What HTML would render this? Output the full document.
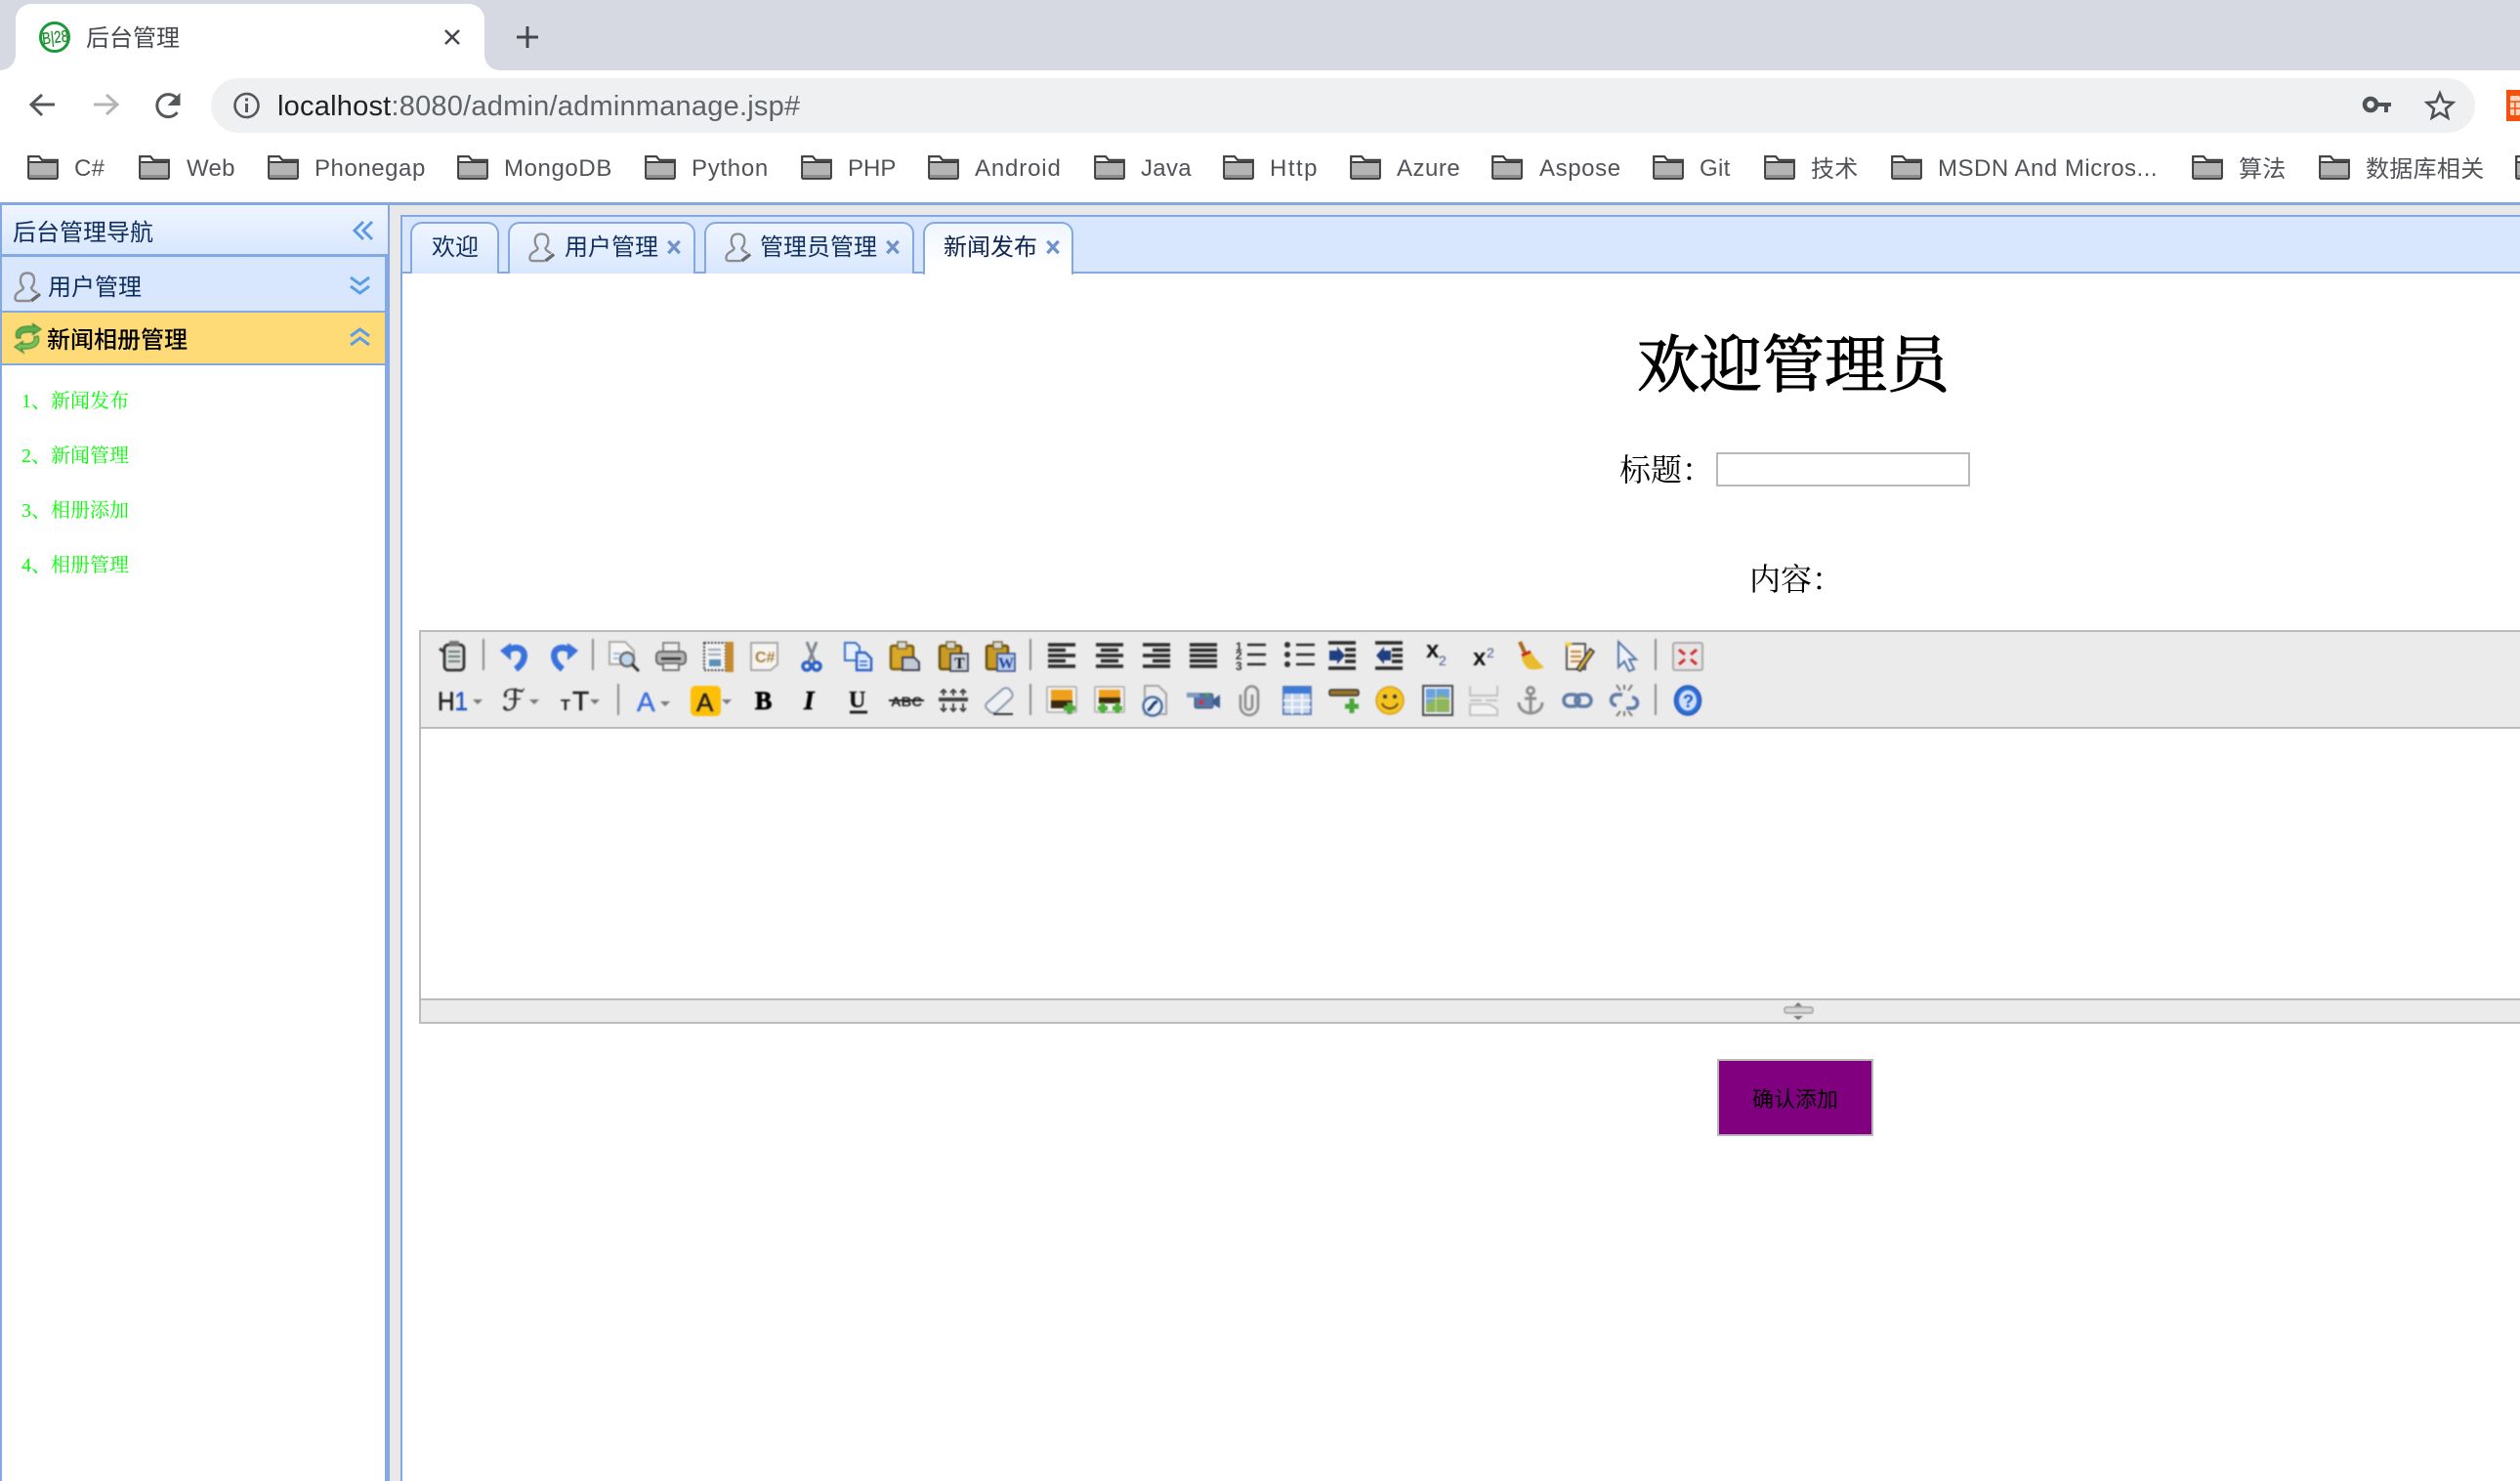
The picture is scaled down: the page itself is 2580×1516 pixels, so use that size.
<!DOCTYPE html>
<html lang="zh-CN"><head><meta charset="utf-8"><title>后台管理</title>
<style>
html,body{margin:0;padding:0;background:#fff}
body{position:relative;width:2580px;height:1516px;overflow:hidden;font-family:"Liberation Sans","Noto Sans CJK SC",sans-serif}
.b{position:absolute;box-sizing:border-box}
.t{position:absolute;white-space:nowrap;line-height:40px;height:40px}
.bm{font-size:24px;color:#505358;letter-spacing:.3px;top:153px}
.cj{top:151px;font-family:"Noto Sans CJK SC",sans-serif}
.nav{font-family:"Noto Sans CJK SC",sans-serif;font-size:24px;color:#0e2d5f}
.tab{position:absolute;top:227px;height:53px;box-sizing:border-box;border:2px solid #84a9e2;border-bottom:0;border-radius:12px 12px 0 0;background:linear-gradient(#eff5ff,#d8e7fe)}
.g{font-family:"Liberation Serif","Noto Serif CJK SC",serif;font-size:20px;color:#0f0;left:22px}
.s{font-family:"Liberation Serif","Noto Serif CJK SC",serif;color:#000;font-size:32px}
svg{position:absolute;left:0;top:0}
</style></head><body>

<!-- browser chrome -->
<div class="b" style="left:0;top:0;width:2580px;height:72px;background:#d6d9e2"></div>
<div class="b" style="left:216px;top:80px;width:2318px;height:56px;border-radius:28px;background:#eff0f2"></div>
<div class="t" style="left:88px;top:17px;font-size:24px;color:#45474c;font-family:'Noto Sans CJK SC',sans-serif;z-index:3">后台管理</div>
<div class="t" style="left:284px;top:89px;font-size:29px;letter-spacing:.22px;color:#5f6368;z-index:3"><span style="color:#202124">localhost</span>:8080/admin/adminmanage.jsp#</div>
<div class="t bm" style="left:76px">C#</div>
<div class="t bm" style="left:191px">Web</div>
<div class="t bm" style="left:322px;letter-spacing:.55px">Phonegap</div>
<div class="t bm" style="left:516px;letter-spacing:.6px">MongoDB</div>
<div class="t bm" style="left:708px;letter-spacing:.7px">Python</div>
<div class="t bm" style="left:868px;letter-spacing:0">PHP</div>
<div class="t bm" style="left:998px;letter-spacing:.85px">Android</div>
<div class="t bm" style="left:1168px">Java</div>
<div class="t bm" style="left:1300px;letter-spacing:1.5px">Http</div>
<div class="t bm" style="left:1430px;letter-spacing:.5px">Azure</div>
<div class="t bm" style="left:1576px;letter-spacing:.6px">Aspose</div>
<div class="t bm" style="left:1740px">Git</div>
<div class="t bm cj" style="left:1854px">技术</div>
<div class="t bm" style="left:1984px;letter-spacing:.5px">MSDN And Micros...</div>
<div class="t bm cj" style="left:2292px">算法</div>
<div class="t bm cj" style="left:2422px">数据库相关</div>

<!-- app background -->
<div class="b" style="left:0;top:207px;width:2580px;height:1309px;background:#e8e8e8;border-top:3px solid #84a9e2"></div>

<!-- left panel -->
<div class="b" style="left:0;top:263px;width:399px;height:1253px;background:#fff;border-left:2px solid #84a9e2;border-right:3px solid #84a9e2"></div>
<div class="b" style="left:394px;top:263px;width:2px;height:1253px;background:#84a9e2"></div>
<div class="b" style="left:0;top:208px;width:399px;height:55px;background:linear-gradient(#eff5ff,#d8e7fe);border:2px solid #84a9e2;border-bottom:3px solid #84a9e2"></div>
<div class="t nav" style="left:13px;top:216px">后台管理导航</div>
<div class="b" style="left:2px;top:263px;width:392px;height:57px;background:#d8e7fe;border-bottom:2px solid #84a9e2"></div>
<div class="t nav" style="left:49px;top:272px">用户管理</div>
<div class="b" style="left:2px;top:320px;width:392px;height:54px;background:#ffdb78;border-bottom:2px solid #84a9e2"></div>
<div class="t nav" style="left:48px;top:326px;color:#000;font-weight:500">新闻相册管理</div>
<div class="t g" style="top:391px">1、新闻发布</div>
<div class="t g" style="top:447px">2、新闻管理</div>
<div class="t g" style="top:503px">3、相册添加</div>
<div class="t g" style="top:559px">4、相册管理</div>

<!-- main panel -->
<div class="b" style="left:410px;top:220px;width:2170px;height:1296px;background:#fff;border-left:2px solid #84a9e2"></div>
<div class="b" style="left:412px;top:220px;width:2168px;height:60px;background:#d8e7fe;border-top:2px solid #84a9e2;border-bottom:2px solid #84a9e2"></div>
<div class="tab" style="left:420px;width:91px"></div>
<div class="tab" style="left:520px;width:192px"></div>
<div class="tab" style="left:721px;width:215px"></div>
<div class="tab" style="left:945px;width:154px;height:54px;background:linear-gradient(#eff5ff,#fff 85%)"></div>
<div class="t nav" style="left:442px;top:231px;color:#12305f">欢迎</div>
<div class="t nav" style="left:578px;top:231px;color:#12305f">用户管理</div>
<div class="t nav" style="left:778px;top:231px;color:#12305f">管理员管理</div>
<div class="t nav" style="left:966px;top:231px;color:#0e2350">新闻发布</div>

<!-- form -->
<div class="t s" style="left:1676px;top:335px;width:320px;height:80px;line-height:80px;font-size:64px;font-weight:400;-webkit-text-stroke:1.1px #000">欢迎管理员</div>
<div class="t s" style="left:1658px;top:461px">标题：</div>
<input class="b" style="left:1757px;top:463px;width:260px;height:35px;border:2px solid #b8b8b8;background:#fff;outline:0" type="text">
<div class="t s" style="left:1791px;top:573px">内容：</div>

<!-- editor -->
<div class="b" style="left:429px;top:645px;width:2151px;height:379px;border:2px solid #bcbcbc;border-right:0;background:#fff"></div>
<div class="b" style="left:431px;top:647px;width:2149px;height:99px;background:#ebebeb;border-bottom:2px solid #bcbcbc"></div>
<div class="b" style="left:429px;top:1022px;width:2151px;height:26px;background:#ebebeb;border:2px solid #bcbcbc;border-right:0"></div>
<button class="b" style="left:1758px;top:1084px;width:160px;height:79px;background:#800080;border:2px solid #b8b8b8;color:#000;font:22px 'Noto Sans CJK SC',sans-serif;padding:0">确认添加</button>

<svg width="2580" height="1516" viewBox="0 0 2580 1516" xmlns="http://www.w3.org/2000/svg" style="z-index:2">
<defs>
<symbol id="fd" viewBox="0 0 32 25" overflow="visible">
<path d="M1.2 1.2H12l3 3.6H30.8V22.6a1.2 1.2 0 0 1-1.2 1.2H2.4a1.2 1.2 0 0 1-1.2-1.2Z" fill="#fff" stroke="#3d3d3f" stroke-width="2.2"/>
<rect x="2.2" y="7.4" width="27.6" height="15.4" fill="#b5b5b5"/>
<rect x="2.2" y="6" width="27.6" height="2" fill="#3d3d3f"/>
<rect x="2.2" y="20" width="27.6" height="2.8" fill="#8c8c8c"/>
</symbol>
<symbol id="us" viewBox="0 0 30 32" overflow="visible">
<path d="M14 1.5c-5 0-7 3-7 7.5 0 3 1 5.500 3 7.500 0 3.500-8 3.500-8.500 10-.2 2.500 1 3.500 3 3.500h13M14 1.500c5 0 7 3 7 7.500 0 3-1 5.500-3 7.500 0 2.500 3 3.500 6 5.500" fill="none" stroke="#8e8e8e" stroke-width="2.400"/>
<path d="M18 30l9-7" stroke="#6a6a6a" stroke-width="3.400"/>
</symbol>
<symbol id="cl" viewBox="-8 -8 16 16" overflow="visible">
<path d="M-6.500-7L6.500 7M6.500-7L-6.500 7" stroke="#6f92c8" stroke-width="3.800" fill="none"/>
</symbol>
</defs>

<!-- browser tab shape -->
<path d="M0 72A16 16 0 0 0 16 56V20A16 16 0 0 1 32 4H480A16 16 0 0 1 496 20V56A16 16 0 0 0 512 72Z" fill="#fff"/>
<circle cx="56" cy="38" r="14.500" fill="#fff" stroke="#1c9a3a" stroke-width="3"/>
<text x="43" y="44" font-size="17" fill="#1f8f30" stroke="#1f8f30" stroke-width=".3" font-family="Liberation Sans" textLength="27" lengthAdjust="spacingAndGlyphs" transform="rotate(-6 56 38)">B|28</text>
<path d="M456 31l14 14M470 31l-14 14" stroke="#45474c" stroke-width="2.600"/>
<path d="M540 27v22M529 38h22" stroke="#45474c" stroke-width="3"/>

<!-- nav buttons -->
<path d="M56 107H32M43 97L32 107l11 11" fill="none" stroke="#54575c" stroke-width="3"/>
<path d="M96 107h24M109 97l11 10-11 10" fill="none" stroke="#b4b5b7" stroke-width="3"/>
<g transform="translate(-1.500 0)">
<path d="M183 115a11.500 11.500 0 1 1-1-15" fill="none" stroke="#54575c" stroke-width="3"/>
<path d="M186 95v13h-13Z" fill="#54575c"/>
</g>
<circle cx="252.500" cy="108" r="12" fill="none" stroke="#54575c" stroke-width="2.600"/>
<rect x="251" y="106" width="3" height="9" fill="#54575c"/><rect x="251" y="100.500" width="3" height="3" fill="#54575c"/>
<circle cx="2427" cy="107" r="6" fill="none" stroke="#4e5156" stroke-width="4.500"/>
<path d="M2433 105h15v4h-3v6h-4v-6h-8Z" fill="#4e5156"/>
<path d="M2498 95.500l3.700 8.800 9.600.8-7.300 6.300 2.200 9.300-8.200-5-8.200 5 2.200-9.300-7.300-6.300 9.600-.8Z" fill="none" stroke="#4e5156" stroke-width="2.600"/>
<rect x="2566" y="92" width="14" height="32" fill="#f4500f"/>
<rect x="2570" y="98" width="10" height="20" rx="2" fill="#fbd7c2"/>
<path d="M2570 104h10M2570 111h10M2575 104v14" stroke="#f4500f" stroke-width="1.500"/>

<!-- bookmark folders -->
<use href="#fd" x="28" y="159" width="32" height="25"/>
<use href="#fd" x="142" y="159" width="32" height="25"/>
<use href="#fd" x="274" y="159" width="32" height="25"/>
<use href="#fd" x="468" y="159" width="32" height="25"/>
<use href="#fd" x="660" y="159" width="32" height="25"/>
<use href="#fd" x="820" y="159" width="32" height="25"/>
<use href="#fd" x="950" y="159" width="32" height="25"/>
<use href="#fd" x="1120" y="159" width="32" height="25"/>
<use href="#fd" x="1252" y="159" width="32" height="25"/>
<use href="#fd" x="1382" y="159" width="32" height="25"/>
<use href="#fd" x="1527" y="159" width="32" height="25"/>
<use href="#fd" x="1692" y="159" width="32" height="25"/>
<use href="#fd" x="1806" y="159" width="32" height="25"/>
<use href="#fd" x="1936" y="159" width="32" height="25"/>
<use href="#fd" x="2244" y="159" width="32" height="25"/>
<use href="#fd" x="2374" y="159" width="32" height="25"/>
<use href="#fd" x="2575" y="159" width="32" height="25"/>

<!-- left nav icons -->
<path d="M372 227l-9 9 9 9M381 227l-9 9 9 9" fill="none" stroke="#5b9ae8" stroke-width="3"/>
<path d="M359 284l9.500 7 9.500-7M359 293l9.500 7 9.500-7" fill="none" stroke="#5a9fe6" stroke-width="3"/>
<path d="M359 344l9.500-7 9.500 7M359 353l9.500-7 9.500 7" fill="none" stroke="#5a9fe6" stroke-width="3"/>
<use href="#us" x="14" y="278" width="30" height="32"/>
<g style="filter:blur(.4px)">
<path d="M17 346c-3-8 4-12 12-12h6l-2-3 9 6-9 6 2-3h-6c-5 0-9 1-8 6Z" fill="#5fae4c" stroke="#3f8a3a" stroke-width="1.200"/>
<path d="M39 344c3 8-4 13-12 13h-5l2 4-9-6 9-6-2 3h5c5 0 9-2 8-7Z" fill="#7cc25c" stroke="#3f8a3a" stroke-width="1.200"/>
</g>

<!-- tab icons / close -->
<use href="#us" x="541" y="238" width="29" height="31"/>
<use href="#us" x="742" y="238" width="29" height="31"/>
<use href="#cl" x="683" y="246" width="14" height="14"/>
<use href="#cl" x="907" y="246" width="14" height="14"/>
<use href="#cl" x="1071" y="246" width="14" height="14"/>

<!-- resize handle -->
<g style="filter:blur(.5px)">
<rect x="1827" y="1031" width="29" height="6" rx="2" fill="#d8d8d8" stroke="#a0a0a0" stroke-width="1.500"/>
<path d="M1841 1026l-4 4h8ZM1841 1044l-5-4h10Z" fill="#777"/>
</g>

<!-- editor toolbar -->
<g style="filter:blur(.7px)">
<!-- separators -->
<path d="M495 654v32M607 654v32M1055 654v32M1695 654v32M633 700v32M1055 700v32M1695 700v32" stroke="#8b8b8b" stroke-width="2"/>

<!-- row 1 -->
<g transform="translate(464 672)"><path d="M-14-8l6 4" stroke="#333" stroke-width="3"/><rect x="-9" y="-12" width="20" height="26" rx="4" fill="#dcdcdc" stroke="#333" stroke-width="2.800"/><rect x="-4" y="-16" width="10" height="5" fill="#777"/><path d="M-5-5H7M-5 0H7M-5 5H7" stroke="#6a7a78" stroke-width="2"/></g>
<g transform="translate(527 672)"><path d="M-6-7C5-12 12-6 9 3 8 7 5 10 1 13" fill="none" stroke="#3a72dc" stroke-width="6.500"/><path d="M-15-6L-4-14V4Z" fill="#3a72dc"/></g>
<g transform="translate(577 672)"><path d="M6-7C-5-12-12-6-9 3-8 7-5 10-1 13" fill="none" stroke="#3a72dc" stroke-width="6.500"/><path d="M15-6L4-14V4Z" fill="#3a72dc"/></g>
<g transform="translate(639 672)"><path d="M-15-15H1l9 9V8H-15Z" fill="#f4f4f4" stroke="#a9a9a9" stroke-width="2"/><circle cx="3" cy="3" r="7" fill="#bcd6ee" stroke="#6c6c6c" stroke-width="2.500"/><path d="M8 8l7 7" stroke="#333" stroke-width="3"/><path d="M-11-3H-4M-11 2H-6" stroke="#9db9d4" stroke-width="2"/></g>
<g transform="translate(687 672)"><rect x="-8" y="-14" width="16" height="10" fill="#eee" stroke="#888" stroke-width="2"/><rect x="-15" y="-5" width="30" height="13" rx="4" fill="#b4b4b4" stroke="#666" stroke-width="2"/><rect x="-10" y="1" width="20" height="2.500" fill="#333"/><rect x="-8" y="7" width="16" height="7" fill="#eee" stroke="#777" stroke-width="2"/></g>
<g transform="translate(735 672)"><rect x="-14" y="-14" width="22" height="28" fill="#f2f2f2" stroke="#444" stroke-width="2" stroke-dasharray="2 1.500"/><path d="M-10-7H3M-10-2H3" stroke="#9ea8b5" stroke-width="2"/><rect x="-9" y="3" width="12" height="7" fill="#5d90b8"/><rect x="8" y="-15" width="8" height="31" fill="#c68a2d"/></g>
<g transform="translate(783 672)"><path d="M-14-14H13V8L6 14H-14Z" fill="#f6f4f0" stroke="#a9a9a9" stroke-width="2"/><text x="-10" y="6" font-family="Liberation Sans" font-size="16" font-weight="700" fill="#a87f3b">C#</text></g>
<g transform="translate(831 672)"><path d="M-5-15L3 5M5-15L-3 5" stroke="#7f8690" stroke-width="3"/><circle cx="-5" cy="10" r="4" fill="none" stroke="#2f62c4" stroke-width="3.500"/><circle cx="5" cy="10" r="4" fill="none" stroke="#2f62c4" stroke-width="3.500"/></g>
<g transform="translate(879 672)"><path d="M-14-14H-3l4 4V4H-14Z" fill="#e8f0fb" stroke="#3d6ec8" stroke-width="2"/><path d="M-2-4H7l6 6V14H-2Z" fill="#dce8fa" stroke="#2f62c4" stroke-width="2.400"/><path d="M1 5H9M1 9H9" stroke="#2f62c4" stroke-width="1.500"/></g>
<g transform="translate(926 672)"><rect x="-14" y="-11" width="23" height="24" rx="2" fill="#d9a82a" stroke="#7c5c10" stroke-width="2.500"/><rect x="-7" y="-15" width="9" height="7" fill="#d8d8d8" stroke="#7a6a3a" stroke-width="1.500"/><path d="M-2 1H10l5 5V14H-2Z" fill="#c2c9d6" stroke="#445" stroke-width="2"/></g>
<g transform="translate(976 672)"><rect x="-14" y="-11" width="22" height="24" rx="2" fill="#c99a24" stroke="#6a4e10" stroke-width="2.500"/><rect x="-7" y="-15" width="9" height="7" fill="#d8d8d8" stroke="#7a6a3a" stroke-width="1.500"/><rect x="-3" y="-3" width="18" height="18" fill="#c9ced8" stroke="#334" stroke-width="1.500"/><text x="1" y="12" font-family="Liberation Serif" font-weight="700" font-size="16" fill="#111">T</text></g>
<g transform="translate(1024 672)"><rect x="-14" y="-11" width="22" height="24" rx="2" fill="#c99a24" stroke="#6a4e10" stroke-width="2.500"/><rect x="-7" y="-15" width="9" height="7" fill="#d8d8d8" stroke="#7a6a3a" stroke-width="1.500"/><rect x="-3" y="-3" width="18" height="18" fill="#bcc9e8" stroke="#2c4a90" stroke-width="1.500"/><text x="-2" y="12" font-family="Liberation Serif" font-weight="700" font-size="16" fill="#1c45a0">W</text></g>

<!-- alignment -->
<g stroke="#2b2b2b" stroke-width="3.400" fill="none">
<path d="M1073 660h28M1073 665.500h18M1073 671h28M1073 676.500h18M1073 682h28"/>
<path d="M1122 660h28M1127 665.500h18M1122 671h28M1127 676.500h18M1122 682h28"/>
<path d="M1170 660h28M1180 665.500h18M1170 671h28M1180 676.500h18M1170 682h28"/>
<path d="M1218 660h28M1218 665.500h28M1218 671h28M1218 676.500h28M1218 682h28"/>
<path d="M1277 660h19M1277 670h19M1277 680h19" stroke-width="2.600"/>
<path d="M1327 660h19M1327 670h19M1327 680h19" stroke-width="2.600"/>
<path d="M1360 658h28M1377 665h11M1377 671h11M1377 677h11M1360 684h28"/>
<path d="M1408 658h28M1425 665h11M1425 671h11M1425 677h11M1408 684h28"/>
</g>
<text x="1265" y="666" font-family="Liberation Sans" font-weight="700" font-size="12" fill="#333">1</text>
<text x="1265" y="675" font-family="Liberation Sans" font-weight="700" font-size="12" fill="#333">2</text>
<text x="1265" y="686" font-family="Liberation Sans" font-weight="700" font-size="12" fill="#333">3</text>
<circle cx="1318" cy="660" r="3" fill="#333"/><circle cx="1318" cy="670" r="3" fill="#333"/><circle cx="1318" cy="680" r="3" fill="#333"/>
<path d="M1361 666h8v-4l8 9-8 9v-4h-8Z" fill="#203f80"/>
<path d="M1424 666h-7v-4l-8 9 8 9v-4h7Z" fill="#203f80"/>
<text x="1460" y="673" font-family="Liberation Sans" font-weight="700" font-size="24" fill="#111">x</text>
<text x="1473" y="681" font-family="Liberation Sans" font-size="14" fill="#42598e">2</text>
<text x="1508" y="681" font-family="Liberation Sans" font-weight="700" font-size="24" fill="#111">x</text>
<text x="1522" y="673" font-family="Liberation Sans" font-size="14" fill="#42598e">2</text>
<g transform="translate(1567 672)"><path d="M-11-15l6 13" stroke="#a66a1c" stroke-width="4"/><path d="M-9-1L0-5C4 1 9 7 14 11 7 14 1 14-3 12-7 8-9 4-9-1Z" fill="#e8bc2e"/><path d="M-9-1L0-5" stroke="#c62a1a" stroke-width="3"/></g>
<g transform="translate(1616 672)"><path d="M-12-13H7V13H-12Z" fill="#f6f3e8" stroke="#555" stroke-width="2"/><path d="M-8-5H3M-8 0H3M-8 5H3" stroke="#c9803c" stroke-width="2"/><path d="M-2 13L12-8l4 3L2 15Z" fill="#d8b040" stroke="#334" stroke-width="1.500"/><path d="M-14-15l8 1-5 6Z" fill="#f4d24a"/></g>
<g transform="translate(1665 672)"><path d="M-8-15V11L-2 5 3 15 8 13 3 3 10 3Z" fill="#eef2fa" stroke="#5576a8" stroke-width="2"/></g>
<g transform="translate(1728 672)"><rect x="-15" y="-14" width="30" height="28" rx="2" fill="#e9e4e4" stroke="#aaa" stroke-width="2"/><path d="M-9-7l6 5M9-7L3-2M-9 8l6-5M9 8L3 3" stroke="#c93030" stroke-width="3"/></g>

<!-- row 2 -->
<text x="448" y="727" font-family="Liberation Sans" font-size="27" fill="#222" stroke="#222" stroke-width=".6" textLength="31" lengthAdjust="spacingAndGlyphs">H<tspan fill="#2456c4" stroke="#2456c4">1</tspan></text>
<path d="M484 716h10l-5 5Z" fill="#777"/>
<text x="514" y="727" font-family="DejaVu Serif,DejaVu Sans,serif" font-size="30" fill="#333" stroke="#333" stroke-width=".5">ℱ</text>
<path d="M542 716h10l-5 5Z" fill="#777"/>
<text x="574" y="727" font-family="Liberation Sans" font-size="16" font-weight="700" fill="#222">T</text>
<text x="586" y="727" font-family="Liberation Sans" font-size="28" fill="#222" stroke="#222" stroke-width=".6">T</text>
<path d="M604 716h10l-5 5Z" fill="#777"/>
<text x="652" y="728" font-family="Liberation Sans" font-size="28" fill="#3d6fe0" stroke="#3d6fe0" stroke-width=".5">A</text>
<path d="M676 718h10l-5 5Z" fill="#777"/>
<rect x="707" y="702" width="31" height="31" rx="5" fill="#fdc007"/>
<text x="713" y="728" font-family="Liberation Sans" font-size="26" fill="#222" stroke="#222" stroke-width=".5">A</text>
<path d="M739 716h10l-5 5Z" fill="#777"/>
<text x="773" y="726" font-family="Liberation Serif" font-weight="700" font-size="26" fill="#000" stroke="#000" stroke-width=".8">B</text>
<text x="823" y="726" font-family="Liberation Serif" font-style="italic" font-weight="700" font-size="27" fill="#000" stroke="#000" stroke-width=".6">I</text>
<text x="869" y="724" font-family="Liberation Serif" font-weight="700" font-size="24" fill="#111" stroke="#111" stroke-width=".3">U</text>
<path d="M870 729h18" stroke="#222" stroke-width="3"/>
<text x="912" y="723" font-family="Liberation Sans" font-weight="700" font-size="14" textLength="32" lengthAdjust="spacingAndGlyphs" fill="#222">ABC</text>
<path d="M910 717h36" stroke="#222" stroke-width="2"/>
<path d="M961 716h30" stroke="#444" stroke-width="4"/>
<path d="M966 708v4M976 708v4M986 708v4M966 720v6M976 720v6M986 720v6M963 709l3-3 3 3M973 709l3-3 3 3M983 709l3-3 3 3M963 725l3 3 3-3M973 725l3 3 3-3M983 725l3 3 3-3" fill="none" stroke="#333" stroke-width="1.800"/>
<g transform="translate(1023 717)"><path d="M-13 3L4-12c2-1 4-1 6 0l3 4c1 2 1 3 0 5L-3 12c-2 1-4 1-6 0l-4-4c-1-1-1-3 0-5Z" fill="#eef0f4" stroke="#8b97ad" stroke-width="2"/><path d="M-6 14H14" stroke="#333" stroke-width="2"/></g>

<g transform="translate(1087 717)"><rect x="-15" y="-14" width="30" height="26" rx="1" fill="#f2f2f2" stroke="#aaa" stroke-width="1.500"/><rect x="-11" y="-11" width="22" height="19" fill="#eea01c"/><rect x="-11" y="0" width="22" height="8" fill="#3a2a10"/><path d="M8 2v12M2 8h12" stroke="#4fab3a" stroke-width="5"/></g>
<g transform="translate(1136 717)"><rect x="-15" y="-14" width="30" height="26" rx="1" fill="#f2f2f2" stroke="#aaa" stroke-width="1.500"/><rect x="-11" y="-11" width="22" height="12" fill="#eea01c"/><rect x="-11" y="-3" width="22" height="6" fill="#3a2a10"/><path d="M-7 2v11M-12 8h10M8 2v11M3 8h10" stroke="#4fab3a" stroke-width="4.500"/></g>
<g transform="translate(1182 717)"><path d="M-10-15H4l8 8V14H-10Z" fill="#ececec" stroke="#a5a5a5" stroke-width="2"/><circle cx="-2" cy="6" r="9.500" fill="#e8eef6" stroke="#466e9e" stroke-width="2.500"/><path d="M-7 10C-3 9-2 2 3 1" fill="none" stroke="#1a3f72" stroke-width="3"/></g>
<g transform="translate(1232 717)"><rect x="-9" y="-7" width="19" height="15" rx="2" fill="#5575a8" stroke="#3b5684"/><path d="M10-1l7-5V8l-7-4Z" fill="#3f5f90"/><rect x="-17" y="-8" width="13" height="5" fill="#7f9ac2"/><circle cx="-2" cy="2" r="2.500" fill="#d33"/><circle cx="4" cy="-6" r="2" fill="#4ba04b"/></g>
<g transform="translate(1279 717)"><path d="M-9-6V6a9 9 0 0 0 18 0V-8a6.500 6.500 0 0 0-13 0V6a3.500 3.500 0 0 0 7 0V-6" fill="none" stroke="#8e8e8e" stroke-width="2.600"/></g>
<g transform="translate(1328 717)"><rect x="-14" y="-14" width="28" height="28" fill="#c8d6ec" stroke="#5f7fb4" stroke-width="2"/><rect x="-14" y="-14" width="28" height="7" fill="#3f7bd6"/><path d="M-5-7V14M5-7V14M-14 0H14M-14 7H14" stroke="#f4f7fc" stroke-width="2"/></g>
<g transform="translate(1376 717)"><rect x="-15" y="-11" width="30" height="6" rx="2" fill="#9a7428" stroke="#333" stroke-width="1.500"/><path d="M8-2v15M1 6h14" stroke="#4aa83a" stroke-width="5"/></g>
<g transform="translate(1423 717)"><circle r="14" fill="#f5c420" stroke="#d69e1a" stroke-width="1.500"/><circle cx="-5" cy="-4" r="2" fill="#333"/><circle cx="5" cy="-4" r="2" fill="#333"/><path d="M-8 3c3 7 13 7 16 0" fill="none" stroke="#6a4a10" stroke-width="2"/></g>
<g transform="translate(1472 717)"><rect x="-15" y="-15" width="30" height="30" fill="#eef" stroke="#4a4a4a" stroke-width="2"/><rect x="-12" y="-12" width="24" height="24" fill="#8fb65a"/><path d="M-12-12H12V-2L4-6-12 4Z" fill="#6aa3dc"/><path d="M-2-12V12M-12-2H12" stroke="#cfe0c0" stroke-width="1"/></g>
<g transform="translate(1519 717)" fill="none" stroke="#c2c2c2" stroke-width="2"><path d="M-14-15V-5H14V-15"/><path d="M-14 0H-2M2 0H14" /><path d="M-14 15V4H6l8 5V15Z" fill="#f2f2f2"/></g>
<g transform="translate(1567 717)" fill="none" stroke="#8e8e8e" stroke-width="3"><circle cy="-10" r="3.500"/><path d="M0-6V13M-6-2H6M-12 2c0 7 6 11 12 11s12-4 12-11"/></g>
<g transform="translate(1615 717)" fill="none" stroke="#5d7ba8" stroke-width="3.500"><rect x="-14" y="-6" width="16" height="12" rx="6"/><rect x="-2" y="-6" width="16" height="12" rx="6"/></g>
<g transform="translate(1663 717)" fill="none"><path d="M-2-7h-6a5.500 5.500 0 0 0 0 11M2 7h6a5.500 5.500 0 0 0 0-11" transform="translate(0 1)" stroke="#5d7ba8" stroke-width="3.500"/><path d="M-4-10l-4-6M4-10l4-6M0-11v-5M-4 11l-4 5M4 11l4 5M0 11v5" stroke="#777" stroke-width="2"/></g>
<g transform="translate(1728 717)"><ellipse rx="13.500" ry="15" fill="#2f6fd8" stroke="#2456b0" stroke-width="1.500"/><ellipse rx="9" ry="10.500" fill="#cfe0fa"/><text x="-5" y="7" font-family="Liberation Sans" font-weight="700" font-size="18" fill="#1f58c4">?</text></g>
</g>
</svg>
</body></html>
